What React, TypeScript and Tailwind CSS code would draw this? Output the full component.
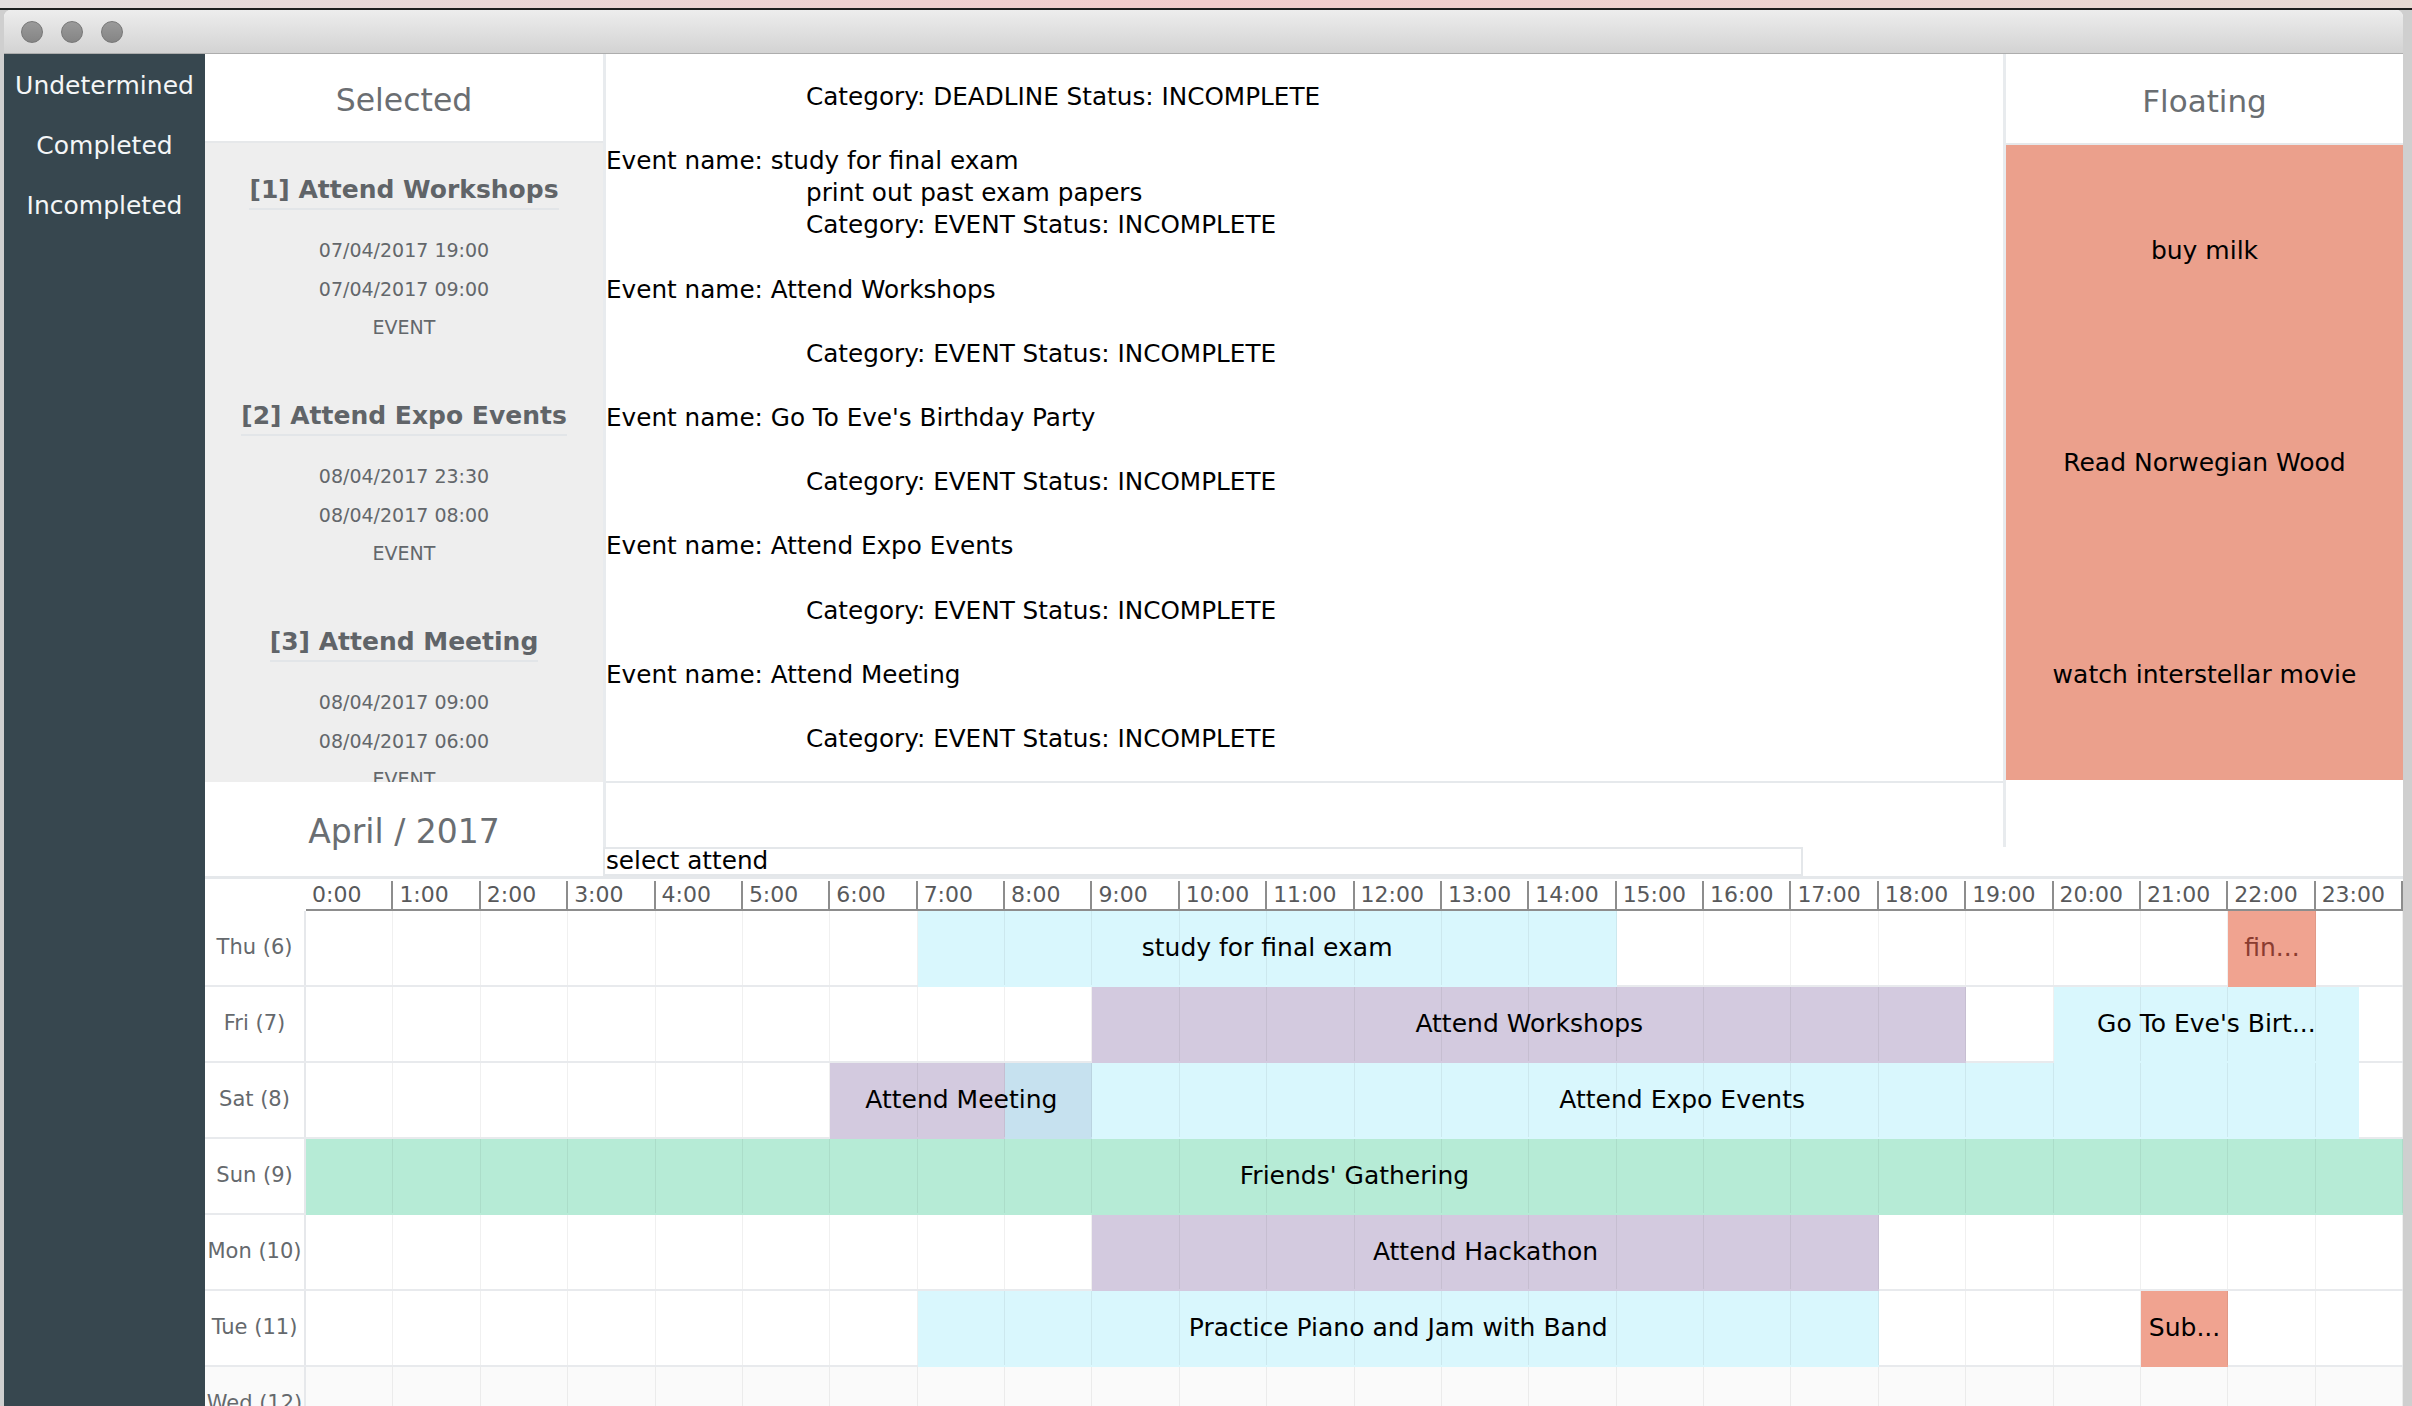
import React from "react";

type Block = { start: number; end: number; bg: string };
type Label = { start: number; end: number; text: string; tone?: string };
type DayRow = { day: string; blocks: Block[]; labels: Label[]; last?: boolean };

const hours = Array.from({ length: 24 }, (_, i) => `${i}:00`);

const selected = [
  { n: 1, title: "Attend Workshops", from: "07/04/2017 19:00", to: "07/04/2017 09:00", type: "EVENT" },
  { n: 2, title: "Attend Expo Events", from: "08/04/2017 23:30", to: "08/04/2017 08:00", type: "EVENT" },
  { n: 3, title: "Attend Meeting", from: "08/04/2017 09:00", to: "08/04/2017 06:00", type: "EVENT" },
];

const details: { text: string; indent?: boolean }[] = [
  { text: "Category: DEADLINE Status: INCOMPLETE", indent: true },
  { text: "" },
  { text: "Event name: study for final exam" },
  { text: "print out past exam papers", indent: true },
  { text: "Category: EVENT Status: INCOMPLETE", indent: true },
  { text: "" },
  { text: "Event name: Attend Workshops" },
  { text: "" },
  { text: "Category: EVENT Status: INCOMPLETE", indent: true },
  { text: "" },
  { text: "Event name: Go To Eve's Birthday Party" },
  { text: "" },
  { text: "Category: EVENT Status: INCOMPLETE", indent: true },
  { text: "" },
  { text: "Event name: Attend Expo Events" },
  { text: "" },
  { text: "Category: EVENT Status: INCOMPLETE", indent: true },
  { text: "" },
  { text: "Event name: Attend Meeting" },
  { text: "" },
  { text: "Category: EVENT Status: INCOMPLETE", indent: true },
];

const floating = ["buy milk", "Read Norwegian Wood", "watch interstellar movie"];

const CYAN = "bg-[#d9f7fd]";
const LILAC = "bg-[#d3cadf]";
const MINT = "bg-[#b6ebd6]";
const SALMON = "bg-[#f0a390]";

const rows: DayRow[] = [
  {
    day: "Thu (6)",
    blocks: [
      { start: 7, end: 15, bg: CYAN },
      { start: 22, end: 23, bg: SALMON },
    ],
    labels: [
      { start: 7, end: 15, text: "study for final exam" },
      { start: 22, end: 23, text: "fin...", tone: "text-[#8a3c30]" },
    ],
  },
  {
    day: "Fri (7)",
    blocks: [
      { start: 9, end: 19, bg: LILAC },
      { start: 20, end: 23.5, bg: CYAN },
    ],
    labels: [
      { start: 9, end: 19, text: "Attend Workshops" },
      { start: 20, end: 23.5, text: "Go To Eve's Birt..." },
    ],
  },
  {
    day: "Sat (8)",
    blocks: [
      { start: 6, end: 8, bg: LILAC },
      { start: 8, end: 9, bg: "bg-[#c6e1ef]" },
      { start: 9, end: 23.5, bg: CYAN },
    ],
    labels: [
      { start: 6, end: 9, text: "Attend Meeting" },
      { start: 8, end: 23.5, text: "Attend Expo Events" },
    ],
  },
  {
    day: "Sun (9)",
    blocks: [{ start: 0, end: 24, bg: MINT }],
    labels: [{ start: 0, end: 24, text: "Friends' Gathering" }],
  },
  {
    day: "Mon (10)",
    blocks: [{ start: 9, end: 18, bg: LILAC }],
    labels: [{ start: 9, end: 18, text: "Attend Hackathon" }],
  },
  {
    day: "Tue (11)",
    blocks: [
      { start: 7, end: 18, bg: CYAN },
      { start: 21, end: 22, bg: SALMON },
    ],
    labels: [
      { start: 7, end: 18, text: "Practice Piano and Jam with Band" },
      { start: 21, end: 22, text: "Sub..." },
    ],
  },
  { day: "Wed (12)", blocks: [], labels: [], last: true },
];

const span = (start: number, end: number) => ({
  left: `${(start / 24) * 100}%`,
  width: `${((end - start) / 24) * 100}%`,
});

const TrafficLight = () => (
  <span className="h-[22px] w-[22px] rounded-full border border-[#777] bg-gradient-to-b from-[#9a9a9a] to-[#858585]" />
);

const App = () => {
  return (
    <div className="h-[1406px] w-[2412px] overflow-hidden bg-[#cfcfcf] font-['DejaVu_Sans',sans-serif]">
      {/* desktop strip above the window */}
      <div className="h-[8px] bg-gradient-to-r from-[#e4dddd] via-[#f2cccc] to-[#e7dad4]" />
      <div className="h-[2px] bg-[#1e1e1e]" />

      <div className="ml-[4px] w-[2399px] overflow-hidden rounded-t-[7px] bg-white">
        <div className="flex h-[44px] items-center gap-[18px] border-b border-[#adadad] bg-gradient-to-b from-[#ededed] to-[#d3d3d3] pl-[17px]">
          <TrafficLight />
          <TrafficLight />
          <TrafficLight />
        </div>

        <div className="flex h-[1352px]">
          {/* sidebar */}
          <div className="flex w-[201px] shrink-0 flex-col items-center bg-[#37474f] pt-[2px] text-[25px] leading-[60px] text-[#f4f6f7]">
            <div>Undetermined</div>
            <div>Completed</div>
            <div>Incompleted</div>
          </div>

          <div className="flex min-w-0 flex-1 flex-col">
            <div className="flex h-[822px]">
              {/* selected */}
              <div className="flex w-[398px] shrink-0 flex-col">
                <div className="flex h-[89px] items-center justify-center border-b-2 border-[#e6e8ea] pt-[7px] text-[31.5px] text-[#6a6e72]">
                  Selected
                </div>
                <div className="h-[639px] overflow-hidden bg-[#eeeeee]">
                  {selected.map((s) => (
                    <div key={s.n} className="flex h-[226px] flex-col items-center pt-[29px]">
                      <div className="border-b-2 border-[#e2e5e8] text-[25px] font-bold leading-[36px] text-[#606468]">
                        [{s.n}] {s.title}
                      </div>
                      <div className="mt-[21px] flex flex-col items-center text-[19px] leading-[38.5px] text-[#63676b]">
                        <span>{s.from}</span>
                        <span>{s.to}</span>
                        <span>{s.type}</span>
                      </div>
                    </div>
                  ))}
                </div>
                <div className="flex h-[94px] items-center justify-center pt-[6px] text-[33px] text-[#6a6e72]">
                  April / 2017
                </div>
              </div>

              {/* details */}
              <div className="flex w-[1400px] shrink-0 flex-col">
                <div className="flex h-[793px] flex-col border-l-[3px] border-[#e8ebee]">
                  <div className="h-[729px] overflow-hidden border-b-2 border-[#e6e9ec] pt-[27px] text-[24.7px] leading-[32.1px] text-black">
                    {details.map((d, i) => (
                      <div key={i} className={`h-[32.1px] whitespace-pre ${d.indent ? "pl-[200px]" : ""}`}>
                        {d.text}
                      </div>
                    ))}
                  </div>
                </div>
                <div className="h-[29px] w-[1200px] border-2 border-[#e4e7ea] pl-[1px] text-[24.7px] leading-[23px] text-black">
                  select attend
                </div>
              </div>

              {/* floating */}
              <div className="flex min-w-0 flex-1 flex-col">
                <div className="flex h-[793px] flex-col border-l-[3px] border-[#e8ebee]">
                  <div className="flex h-[91px] items-center justify-center border-b-2 border-[#e6e8ea] pt-[6px] text-[31px] text-[#6a6e72]">
                    Floating
                  </div>
                  <div className="h-[635px] bg-[#eba08c]">
                    {floating.map((f) => (
                      <div key={f} className="flex h-[212px] items-center justify-center text-[25px] text-black">
                        {f}
                      </div>
                    ))}
                  </div>
                </div>
              </div>
            </div>

            {/* timetable */}
            <div className="flex-1 border-t-[3px] border-[#e5e8eb] pt-[2px]">
              <div className="flex h-[30px]">
                <div className="w-[101px] shrink-0" />
                <div className="grid flex-1 grid-cols-[repeat(24,minmax(0,1fr))]">
                  {hours.map((h) => (
                    <div
                      key={h}
                      className="border-r-2 border-b-2 border-[#8d8d8d] pl-[6px] text-[22px] leading-[28px] text-[#58595b]"
                    >
                      {h}
                    </div>
                  ))}
                </div>
              </div>

              {rows.map((r) => (
                <div
                  key={r.day}
                  className={`flex h-[76px] border-b-2 border-[#e8eaed] ${r.last ? "bg-[#fafafa]" : ""}`}
                >
                  <div className="flex w-[101px] shrink-0 items-center justify-center border-r-2 border-[#e6e8eb] text-[21px] text-[#65696d]">
                    {r.day}
                  </div>
                  <div className="relative flex-1">
                    {r.blocks.map((b, i) => (
                      <div key={i} className={`absolute -bottom-[2px] top-0 ${b.bg}`} style={span(b.start, b.end)} />
                    ))}
                    <div className="absolute inset-0 grid grid-cols-[repeat(24,minmax(0,1fr))]">
                      {hours.map((h) => (
                        <div key={h} className="border-r border-black/[0.06]" />
                      ))}
                    </div>
                    {r.labels.map((l, i) => (
                      <div
                        key={i}
                        className={`absolute inset-y-0 flex items-center justify-center whitespace-nowrap text-[25px] ${l.tone ?? "text-black"}`}
                        style={span(l.start, l.end)}
                      >
                        {l.text}
                      </div>
                    ))}
                  </div>
                </div>
              ))}
            </div>
          </div>
        </div>
      </div>
    </div>
  );
};

export default App;
